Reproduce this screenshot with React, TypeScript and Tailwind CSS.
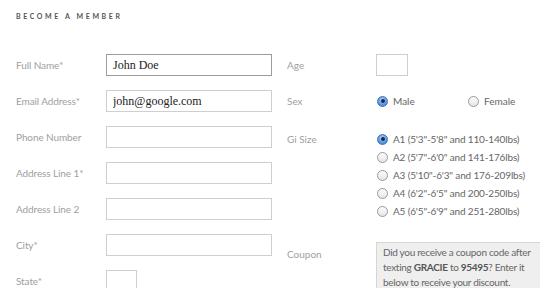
import { useState } from 'react';

const labelFont = { fontFamily: 'Lato, "Open Sans", sans-serif' };

type Field = { label: string; value?: string; small?: boolean; focus?: boolean };

const leftFields: Field[] = [
  { label: 'Full Name*', value: 'John Doe', focus: true },
  { label: 'Email Address*', value: 'john@google.com' },
  { label: 'Phone Number' },
  { label: 'Address Line 1*' },
  { label: 'Address Line 2' },
  { label: 'City*' },
  { label: 'State*', small: true },
];

const giSizes = [
  'A1 (5\'3"-5\'8" and 110-140lbs)',
  'A2 (5\'7"-6\'0" and 141-176lbs)',
  'A3 (5\'10"-6\'3" and 176-209lbs)',
  'A4 (6\'2"-6\'5" and 200-250lbs)',
  'A5 (6\'5"-6\'9" and 251-280lbs)',
];

function Radio({ checked, onClick }: { checked: boolean; onClick: () => void }) {
  return (
    <button
      onClick={onClick}
      className={
        checked
          ? 'flex items-center justify-center w-[11px] h-[11px] rounded-full border border-[#3a6fb8] bg-[radial-gradient(circle_at_50%_35%,#b9d6f6,#4b8ee0_70%)] shrink-0'
          : 'flex items-center justify-center w-[11px] h-[11px] rounded-full border border-[#9a9a9a] bg-[linear-gradient(#fdfdfd,#e6e6e6)] shrink-0'
      }
    >
      {checked && <span className="w-[4px] h-[4px] rounded-full bg-[#1b2a44]" />}
    </button>
  );
}

export default function App() {
  const [sex, setSex] = useState('male');
  const [gi, setGi] = useState(0);

  return (
    <div className="w-[540px] h-[288px] overflow-hidden bg-white pt-[12px] pl-[16px]" style={labelFont}>
      <h2 className="text-[7px] font-bold tracking-[2.6px] text-[#555] leading-[9px]">BECOME A MEMBER</h2>

      <div className="flex mt-[33px]">
        {/* Left column */}
        <div className="flex flex-col gap-[14px] w-[256px]">
          {leftFields.map(f => (
            <div key={f.label} className="flex items-center h-[22px]">
              <label className="w-[90px] text-[10px] tracking-[-0.1px] text-[#a0a0a0]">{f.label}</label>
              <input
                defaultValue={f.value}
                className={
                  (f.small ? 'w-[31px] ' : 'w-[166px] ') +
                  (f.focus ? 'border-[#9c9c9c] ' : 'border-[#cfcfcf] ') +
                  'h-[22px] border px-[6px] text-[12px] text-[#222] outline-none'
                }
                style={{ fontFamily: '"Liberation Serif", Georgia, serif' }}
              />
            </div>
          ))}
        </div>

        {/* Right column */}
        <div className="flex flex-col ml-[15px] flex-1">
          <div className="flex items-center h-[22px]">
            <label className="w-[89px] text-[10px] text-[#a0a0a0]">Age</label>
            <input className="w-[32px] h-[22px] border border-[#cfcfcf] outline-none" />
          </div>

          <div className="flex items-center h-[22px] mt-[14px]">
            <label className="w-[90px] text-[10px] text-[#a0a0a0]">Sex</label>
            <Radio checked={sex === 'male'} onClick={() => setSex('male')} />
            <span className="ml-[5px] w-[75px] text-[10px] text-[#666]">Male</span>
            <Radio checked={sex === 'female'} onClick={() => setSex('female')} />
            <span className="ml-[5px] text-[10px] text-[#666]">Female</span>
          </div>

          <div className="flex mt-[18px]">
            <label className="w-[90px] h-[18px] flex items-center text-[10px] text-[#a0a0a0]">Gi Size</label>
            <div className="flex flex-col">
              {giSizes.map((s, i) => (
                <div key={s} className="flex items-center h-[18px]">
                  <Radio checked={gi === i} onClick={() => setGi(i)} />
                  <span className="ml-[5px] text-[10px] tracking-[-0.15px] text-[#666] whitespace-nowrap">{s}</span>
                </div>
              ))}
            </div>
          </div>

          <div className="flex mt-[22px]">
            <label className="w-[89px] pt-[5px] text-[10px] text-[#a0a0a0] leading-[15px]">Coupon</label>
            <div className="flex-1 bg-[#efefef] border border-[#d6d6d6] border-r-0 pl-[6px] pt-[2px] pb-[4px] text-[10px] tracking-[-0.3px] leading-[15px] text-[#666] whitespace-nowrap">
              Did you receive a coupon code after
              <br />
              texting <b className="text-[#555]">GRACIE</b> to <b className="text-[#555]">95495</b>? Enter it
              <br />
              below to receive your discount.
            </div>
          </div>
        </div>
      </div>
    </div>
  );
}
